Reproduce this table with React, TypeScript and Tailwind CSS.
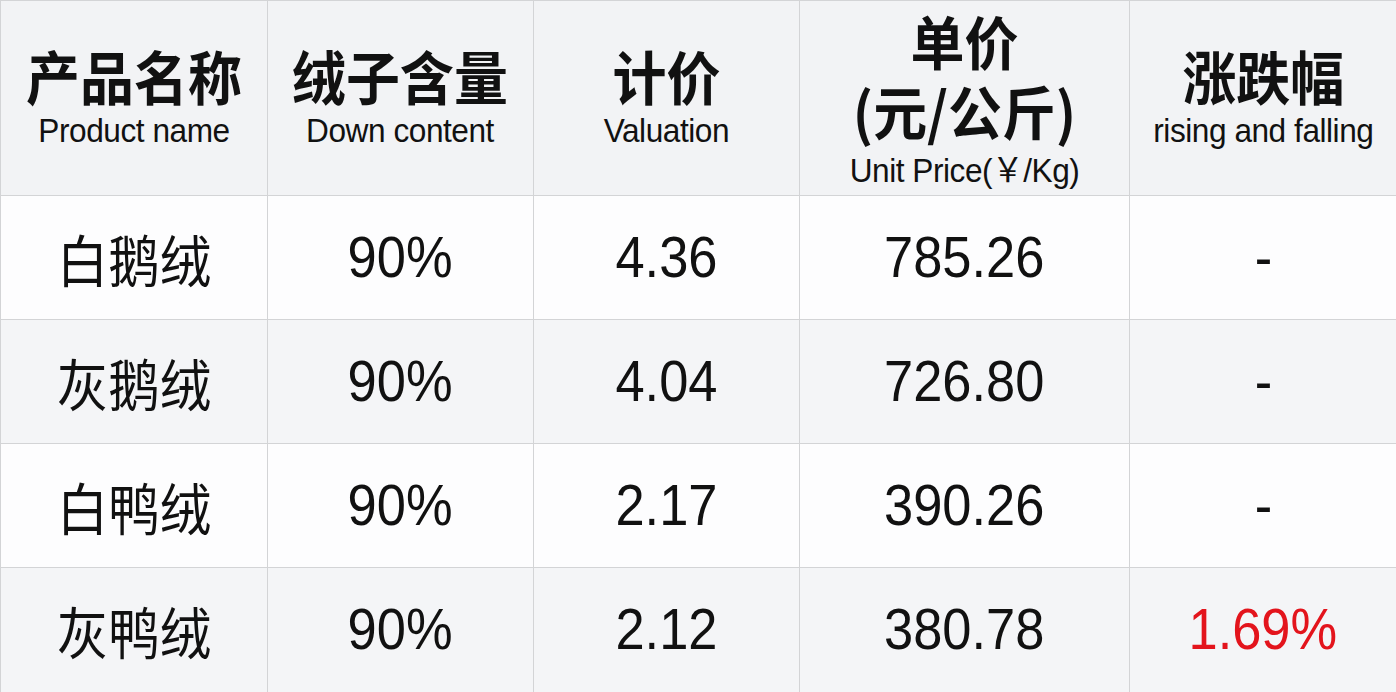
import React from "react";

const cjk = "font-['Noto_Sans_CJK_SC',sans-serif]";
const latin = "font-['Liberation_Sans','Noto_Sans_CJK_SC',sans-serif]";

const rows = [
  { name: "白鹅绒", content: "90%", val: "4.36", price: "785.26", change: "-", bg: "bg-[#fdfdfe]" },
  { name: "灰鹅绒", content: "90%", val: "4.04", price: "726.80", change: "-", bg: "bg-[#f4f5f7]" },
  { name: "白鸭绒", content: "90%", val: "2.17", price: "390.26", change: "-", bg: "bg-[#fdfdfe]" },
  { name: "灰鸭绒", content: "90%", val: "2.12", price: "380.78", change: "1.69%", bg: "bg-[#f4f5f7]", red: true },
];

function HeadCell({ zh, en }: { zh: React.ReactNode; en: string }) {
  return (
    <div className="flex items-center justify-center border-r border-b border-[#d3d4d6] bg-[#f2f3f5]">
      <div className="flex scale-x-[0.93] flex-col items-center pb-[3px] text-[#111]">
        <div className={`${cjk} text-[58px] font-bold leading-[58px] whitespace-nowrap`}>{zh}</div>
        <div className={`${latin} mt-[8px] text-[34px] leading-[36px] tracking-[-0.5px] whitespace-nowrap`}>{en}</div>
      </div>
    </div>
  );
}

function Cell({ children, bg, cls }: { children: React.ReactNode; bg: string; cls?: string }) {
  return (
    <div className={`flex items-center justify-center border-r border-b border-[#d3d4d6] ${bg}`}>
      <div className={`scale-x-[0.92] whitespace-nowrap ${cls ?? ""}`}>{children}</div>
    </div>
  );
}

export default function App() {
  return (
    <div className="h-[692px] w-[1396px] overflow-hidden bg-white">
      <div className="grid grid-cols-[267px_266px_266px_330px_267px] grid-rows-[195px_124px_124px_124px_125px] border-t border-l border-[#d3d4d6]">
        <HeadCell zh="产品名称" en="Product name" />
        <HeadCell zh="绒子含量" en="Down content" />
        <HeadCell zh="计价" en="Valuation" />
        <div className="flex items-center justify-center border-r border-b border-[#d3d4d6] bg-[#f2f3f5]">
          <div className="flex scale-x-[0.93] flex-col items-center pb-[4px] text-[#111]">
            <div className={`${cjk} text-[58px] font-bold leading-[70px] whitespace-nowrap`}>单价</div>
            <div className={`${cjk} text-[58px] font-bold leading-[70px] whitespace-nowrap`}>(元/公斤)</div>
            <div className={`${latin} mt-[7px] text-[34px] leading-[36px] tracking-[-0.5px] whitespace-nowrap`}>Unit Price(￥/Kg)</div>
          </div>
        </div>
        <HeadCell zh="涨跌幅" en="rising and falling" />

        {rows.map((r) => (
          <React.Fragment key={r.name}>
            <Cell bg={r.bg} cls={`${cjk} text-[56px] text-[#111]`}>{r.name}</Cell>
            <Cell bg={r.bg} cls={`${latin} text-[57px] text-[#111]`}>{r.content}</Cell>
            <Cell bg={r.bg} cls={`${latin} text-[57px] text-[#111]`}>{r.val}</Cell>
            <Cell bg={r.bg} cls={`${latin} text-[57px] text-[#111]`}>{r.price}</Cell>
            <Cell bg={r.bg} cls={`${latin} text-[57px] ${r.red ? "text-[#e3141c]" : "text-[#111]"}`}>{r.change}</Cell>
          </React.Fragment>
        ))}
      </div>
    </div>
  );
}
